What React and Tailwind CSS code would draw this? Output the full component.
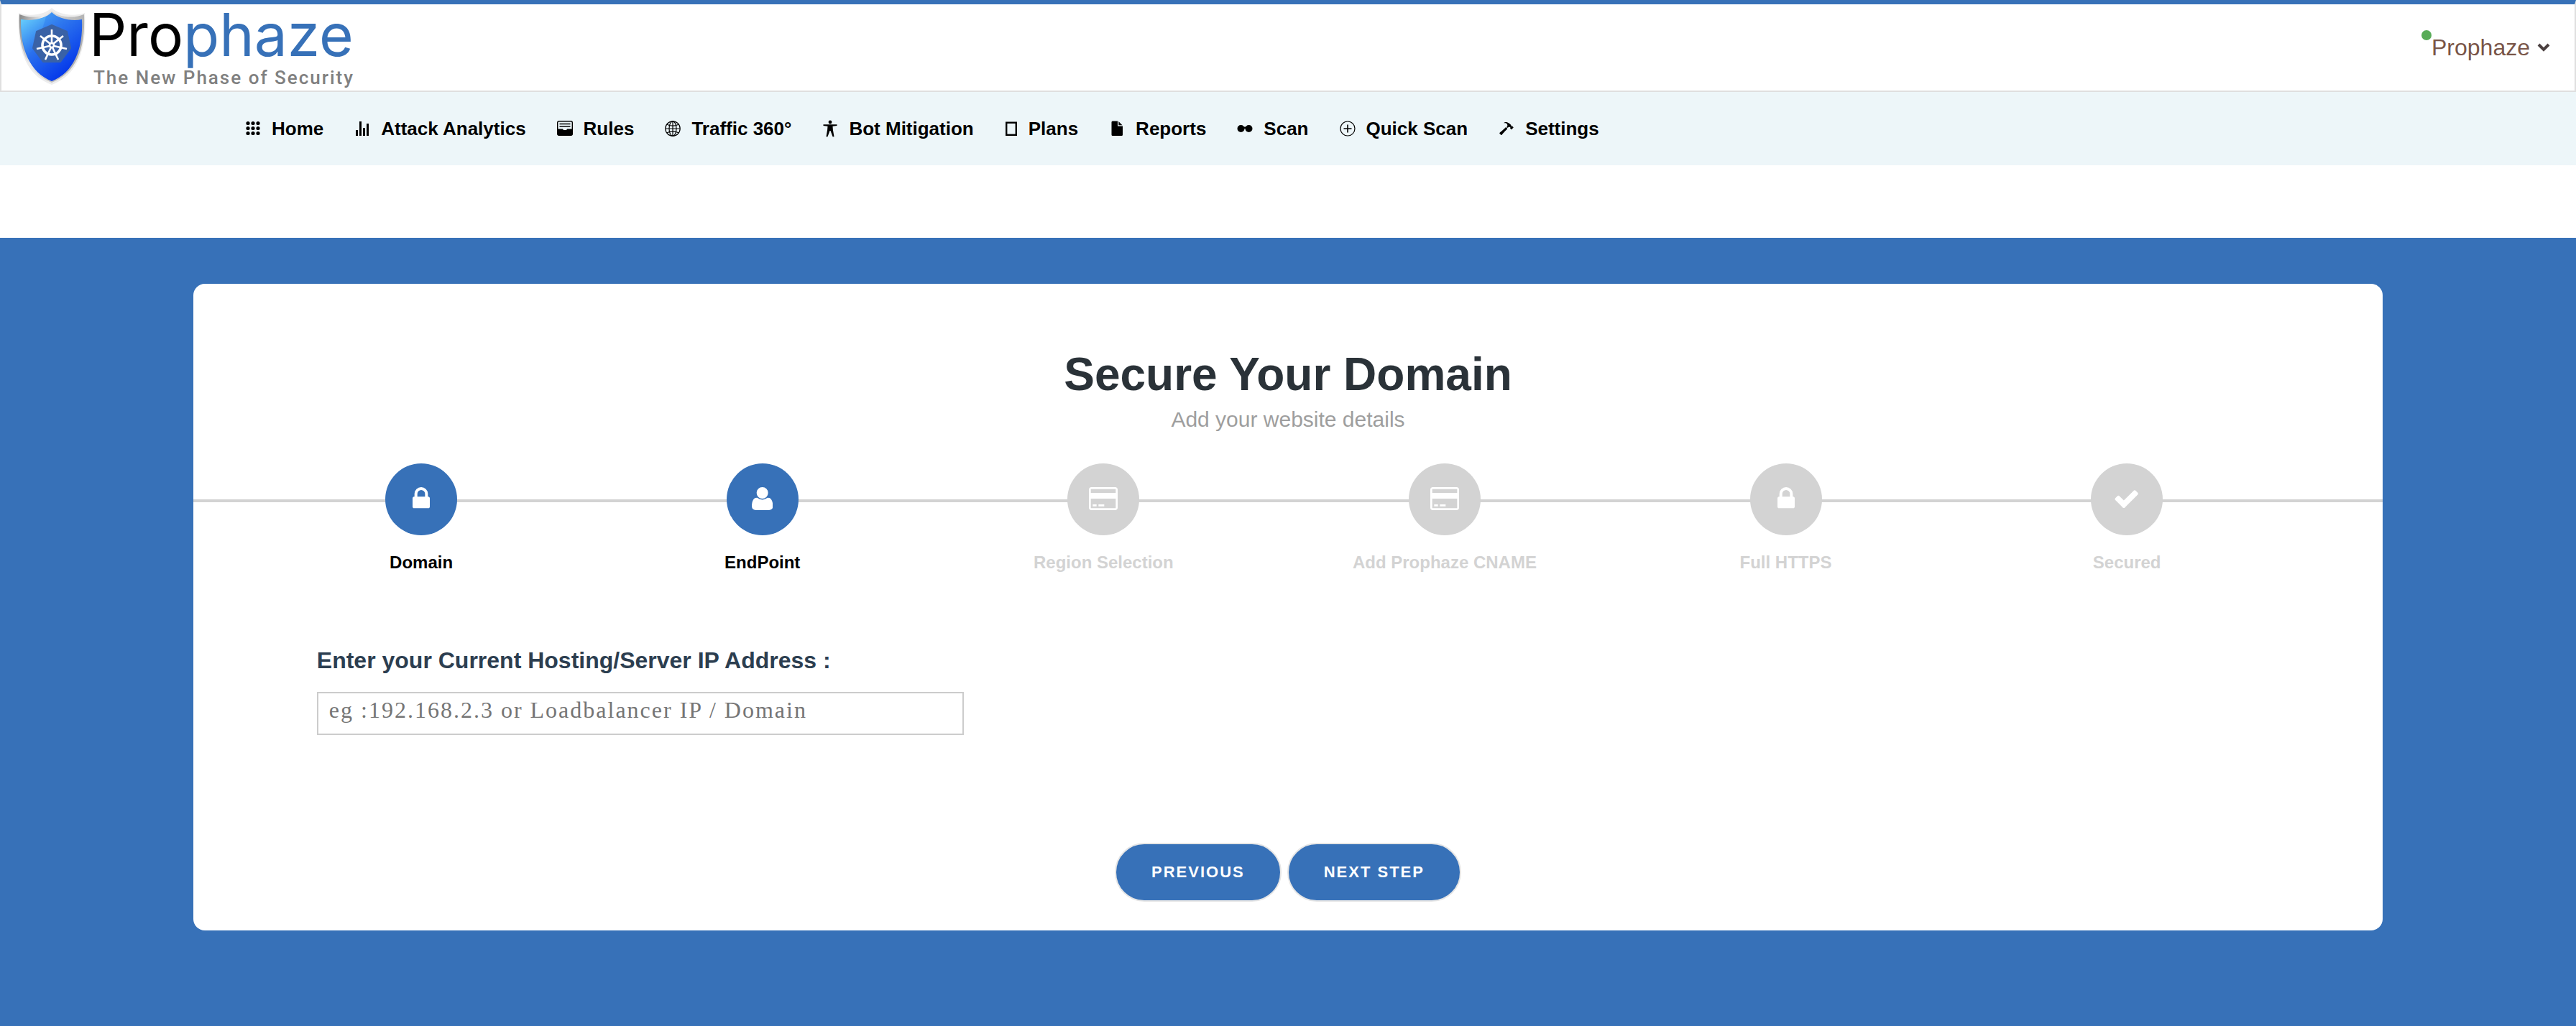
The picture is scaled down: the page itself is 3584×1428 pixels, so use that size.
import React from "react";
import { IoIosHammer } from "react-icons/io";

// 24px menu icons
const HomeIcon = () => (
  <svg viewBox="0 0 24 24" className="size-6" fill="currentColor" aria-hidden="true">
    {[4.5, 11.5, 18.5].map((y) =>
      [5, 12, 19].map((x) => <circle key={`${x}-${y}`} cx={x} cy={y} r="2.6" />)
    )}
  </svg>
);

const StatsIcon = () => (
  <svg viewBox="0 0 24 24" className="size-6" fill="currentColor" aria-hidden="true">
    <path d="M3 14h3v8H3zM8 2h3v20H8zM13 11h3v11h-3zM18 5h3v17h-3z" />
  </svg>
);

const RulesIcon = () => (
  <svg viewBox="0 0 24 24" className="size-6" aria-hidden="true">
    <rect x="1.7" y="1.7" width="20.6" height="19.6" rx="2" fill="none" stroke="currentColor" strokeWidth="1.4" />
    <path d="M4.5 5.5h15M4.5 9h15" stroke="currentColor" strokeWidth="1.4" />
    <path d="M1.5 12.5H9c0 2 6 2 6 0h7.5v7a2 2 0 0 1-2 2h-17a2 2 0 0 1-2-2z" fill="currentColor" />
  </svg>
);

const GlobeIcon = () => (
  <svg viewBox="0 0 24 24" className="size-6" fill="none" stroke="currentColor" strokeWidth="1.2" aria-hidden="true">
    <circle cx="12" cy="12" r="10.2" />
    <ellipse cx="12" cy="12" rx="5" ry="10.2" />
    <path d="M12 2v20M2 12h20M4 6.2c5 2.4 11 2.4 16 0M4 17.8c5-2.4 11-2.4 16 0" />
  </svg>
);

const BodyIcon = () => (
  <svg viewBox="0 0 24 24" className="size-6" fill="currentColor" aria-hidden="true">
    <circle cx="12" cy="3" r="2.4" />
    <path d="M2.5 6.3h19V8l-6 .7.4 5 1.6 9.5h-2L12.5 15h-1L8.5 23.2h-2L8.1 13.7l.4-5-6-.7z" />
  </svg>
);

const TabletIcon = () => (
  <svg viewBox="0 0 20 24" className="h-6 w-5" fill="none" stroke="currentColor" strokeWidth="2.4" aria-hidden="true">
    <rect x="3.2" y="3.7" width="13.6" height="17.1" />
  </svg>
);

const ReportIcon = () => (
  <svg viewBox="0 0 24 24" className="size-6" fill="currentColor" aria-hidden="true">
    <path d="M6 1.5h7v7h7v12a1.5 1.5 0 0 1-1.5 1.5H6A1.5 1.5 0 0 1 4.5 20.5V3A1.5 1.5 0 0 1 6 1.5z" />
    <path d="M14.3 2v5.2h5.2z" />
  </svg>
);

const ScanIcon = () => (
  <svg viewBox="0 0 24 24" className="size-6" fill="currentColor" aria-hidden="true">
    <circle cx="6.5" cy="12" r="5" />
    <circle cx="17.5" cy="12" r="5" />
    <rect x="9" y="9.5" width="6" height="2.5" />
  </svg>
);

const QuickScanIcon = () => (
  <svg viewBox="0 0 24 24" className="size-6" fill="none" stroke="currentColor" strokeWidth="1.2" aria-hidden="true">
    <circle cx="12" cy="12" r="10" />
    <path d="M12 6.5v11M6.5 12h11" strokeWidth="1.6" />
  </svg>
);

const SettingsIcon = () => <IoIosHammer className="size-6" aria-hidden="true" />;

const navItems = [
  { label: "Home", icon: HomeIcon },
  { label: "Attack Analytics", icon: StatsIcon },
  { label: "Rules", icon: RulesIcon },
  { label: "Traffic 360°", icon: GlobeIcon },
  { label: "Bot Mitigation", icon: BodyIcon },
  { label: "Plans", icon: TabletIcon },
  { label: "Reports", icon: ReportIcon },
  { label: "Scan", icon: ScanIcon },
  { label: "Quick Scan", icon: QuickScanIcon },
  { label: "Settings", icon: SettingsIcon }
];

// Glyph outlines on a 1792 unit em, y axis pointing up
const glyphs = {
  lock: {
    width: 1152,
    d: "M320 768h512v192q0 106 -75 181t-181 75t-181 -75t-75 -181v-192zM1152 672v-576q0 -40 -28 -68t-68 -28h-960q-40 0 -68 28t-28 68v576q0 40 28 68t68 28h32v192q0 184 132 316t316 132t316 -132t132 -316v-192h32q40 0 68 -28t28 -68z"
  },
  user: {
    width: 1408,
    d: "M1408 131q0 -120 -73 -189.5t-194 -69.5h-874q-121 0 -194 69.5t-73 189.5q0 53 3.5 103.5t14 109t26.5 108.5t43 97.5t62 81t85.5 53.5t111.5 20q9 0 42 -21.5t74.5 -48t108 -48t133.5 -21.5t133.5 21.5t108 48t74.5 48t42 21.5q61 0 111.5 -20t85.5 -53.5t62 -81t43 -97.5t26.5 -108.5t14 -109t3.5 -103.5zM1088 1024q0 -159 -112.5 -271.5t-271.5 -112.5t-271.5 112.5t-112.5 271.5t112.5 271.5t271.5 112.5t271.5 -112.5t112.5 -271.5z"
  },
  card: {
    width: 1920,
    d: "M1760 1408q66 0 113 -47t47 -113v-1216q0 -66 -47 -113t-113 -47h-1600q-66 0 -113 47t-47 113v1216q0 66 47 113t113 47h1600zM160 1280q-13 0 -22.5 -9.5t-9.5 -22.5v-224h1664v224q0 13 -9.5 22.5t-22.5 9.5h-1600zM1760 0q13 0 22.5 9.5t9.5 22.5v608h-1664v-608q0 -13 9.5 -22.5t22.5 -9.5h1600zM256 128v128h256v-128h-256zM640 128v128h384v-128h-384z"
  },
  check: {
    width: 1792,
    d: "M1671 970q0 -40 -28 -68l-724 -724l-136 -136q-28 -28 -68 -28t-68 28l-136 136l-362 362q-28 28 -28 68t28 68l136 136q28 28 68 28t68 -28l294 -295l656 657q28 28 68 28t68 -28l136 -136q28 -28 28 -68z"
  }
};

const steps = [
  { label: "Domain", glyph: "lock", done: true },
  { label: "EndPoint", glyph: "user", done: true },
  { label: "Region Selection", glyph: "card", done: false },
  { label: "Add Prophaze CNAME", glyph: "card", done: false },
  { label: "Full HTTPS", glyph: "lock", done: false },
  { label: "Secured", glyph: "check", done: false }
];

const StepIcon = ({ name }) => {
  const { width, d } = glyphs[name];
  return (
    <svg viewBox={`0 0 ${width} 1536`} className="h-8 w-auto" fill="currentColor" aria-hidden="true">
      <path transform="translate(0 1408) scale(1 -1)" d={d} />
    </svg>
  );
};

const Shield = () => (
  <svg viewBox="0 0 96 110" className="w-24 shrink-0" aria-hidden="true">
    <defs>
      <linearGradient id="shieldRim" x1="0" y1="0" x2="1" y2="0.3">
        <stop offset="0" stopColor="#808080" />
        <stop offset="0.35" stopColor="#ececec" />
        <stop offset="0.7" stopColor="#c4c4c4" />
        <stop offset="1" stopColor="#b0b0b0" />
      </linearGradient>
      <linearGradient id="shieldFill" x1="0.1" y1="0" x2="0.75" y2="0.9">
        <stop offset="0" stopColor="#4fb4f8" />
        <stop offset="0.4" stopColor="#2f78ee" />
        <stop offset="1" stopColor="#0336ea" />
      </linearGradient>
      <linearGradient id="shieldShine" x1="0" y1="0" x2="0.5" y2="1">
        <stop offset="0" stopColor="#6fd6fc" stopOpacity="0.9" />
        <stop offset="1" stopColor="#3a8ef4" stopOpacity="0" />
      </linearGradient>
    </defs>
    <path d="M48 2C40 10 20 15 2 9C-1 60 12 95 48 109C84 95 97 60 94 9C76 15 56 10 48 2Z" fill="#ededed" />
    <path d="M48 6C40 14 20 18 3 11C1 60 14 92 48 106C82 92 95 60 93 11C76 18 56 14 48 6Z" fill="url(#shieldRim)" />
    <path d="M48 8C39 17 21 21 5 18C4 60 18 92 48 104C78 92 92 60 90 18C75 21 57 17 48 8Z" fill="url(#shieldFill)" />
    <path d="M40 14C30 19 18 20 5 18C5 38 8 54 15 68C24 58 33 40 40 14Z" fill="url(#shieldShine)" />
    <path d="M48 26L69 35L74 58L60 77H36L22 58L27 35Z" fill="#3a62a6" stroke="#3a62a6" strokeWidth="2" strokeLinejoin="round" />
    <g stroke="#fff" fill="none" strokeWidth="2.6">
      <circle cx="48" cy="54" r="13" strokeWidth="3.6" />
      <circle cx="48" cy="54" r="3" />
      <path d="M48 51V32M50 52L64 41M51 55L69 59M49 57L57 74M47 57L39 74M45 55L27 59M46 52L32 41" />
    </g>
  </svg>
);

const Header = () => (
  <header className="flex items-center justify-between border-2 border-t-[6px] border-[#dfdfdf] border-t-[#3771b8] h-32 pl-[22px] pr-[34px]">
    <a href="#home" className="flex items-start gap-1">
      <Shield />
      <span className="flex flex-col gap-1">
        <span className="font-['Inter',sans-serif] text-[82px] leading-[80px] text-black">
          Pro<span className="text-[#3771b8]">phaze</span>
        </span>
        <span className="pl-1.5 font-['Roboto',sans-serif] font-medium text-[26px] leading-[30px] tracking-[2px] text-[#808080]">
          The New Phase of Security
        </span>
      </span>
    </a>
    <button type="button" className="relative flex items-center gap-2.5 text-[32px] leading-10 text-[#795548]">
      <span className="absolute -left-3.5 -top-1 size-3.5 rounded-full bg-[#58ab57]" />
      Prophaze
      <svg viewBox="0 0 18 12" className="w-[18px]" fill="none" stroke="#4b4040" strokeWidth="4" aria-hidden="true">
        <path d="M2 2L9 9L16 2" />
      </svg>
    </button>
  </header>
);

const NavBar = () => (
  <nav className="bg-[#edf6f9] pl-[340px] h-[102px] flex items-center">
    <ul className="flex gap-[42px]">
      {navItems.map(({ label, icon: Icon }) => (
        <li key={label}>
          <a href="#" className="flex items-center gap-3.5 text-[26px] leading-8 font-bold text-black whitespace-nowrap">
            <Icon />
            {label}
          </a>
        </li>
      ))}
    </ul>
  </nav>
);

const App = () => {
  return (
    <div className="min-h-screen flex flex-col bg-white font-['Liberation_Sans',Arial,sans-serif]">
      <Header />
      <NavBar />
      <main className="mt-[101px] grow bg-[#3771b8] pt-16 pb-[133px]">
        <section className="mx-auto w-[85%] rounded-2xl bg-white pt-[86px] pb-10">
          <h1 className="text-center text-[64px] leading-[80px] font-bold text-[#2a3238]">Secure Your Domain</h1>
          <p className="text-center text-[30px] leading-[46px] text-[#9e9e9e]">Add your website details</p>

          <div className="relative mt-[38px]">
            <div className="absolute inset-x-0 top-[50px] h-1 bg-[#d3d3d3]" />
            <ol className="relative flex pl-20">
              {steps.map(({ label, glyph, done }) => (
                <li key={label} className="w-[16%] flex flex-col items-center gap-[22px]">
                  <span
                    className={`flex size-[100px] items-center justify-center rounded-full pb-0.5 text-white ${done
                      ? "bg-[#3771b8]"
                      : "bg-[#d3d3d3]"
                      }`}
                  >
                    <StepIcon name={glyph} />
                  </span>
                  <span className={`text-2xl font-bold ${done ? "text-black" : "text-[#d3d3d3]"}`}>{label}</span>
                </li>
              ))}
            </ol>
          </div>

          <form onSubmit={(e) => e.preventDefault()}>
            <div className="mt-[100px] flex flex-col items-start gap-6 pl-[172px]">
              <label htmlFor="endpoint" className="text-[32px] leading-10 font-bold text-[#2c3e50]">
                Enter your Current Hosting/Server IP Address :
              </label>
              <input
                id="endpoint"
                type="text"
                placeholder="eg :192.168.2.3 or Loadbalancer IP / Domain"
                className="h-[60px] w-[900px] border-2 border-[#ccc] px-[15px] pb-2.5 font-['Liberation_Serif','Times_New_Roman',serif] text-[32px] tracking-[2px] placeholder:text-[#757575]"
              />
            </div>
            <div className="mt-[150px] flex justify-center gap-2">
              <button type="button" className="h-[82px] rounded-full border-2 border-[#e6e6e6] bg-[#3771b8] px-[49px] pb-0.5 text-[22px] font-bold uppercase tracking-[2px] text-white">
                Previous
              </button>
              <button type="submit" className="h-[82px] rounded-full border-2 border-[#e6e6e6] bg-[#3771b8] px-[49px] pb-0.5 text-[22px] font-bold uppercase tracking-[2px] text-white">
                Next Step
              </button>
            </div>
          </form>
        </section>
      </main>
    </div>
  );
};

export default App;
